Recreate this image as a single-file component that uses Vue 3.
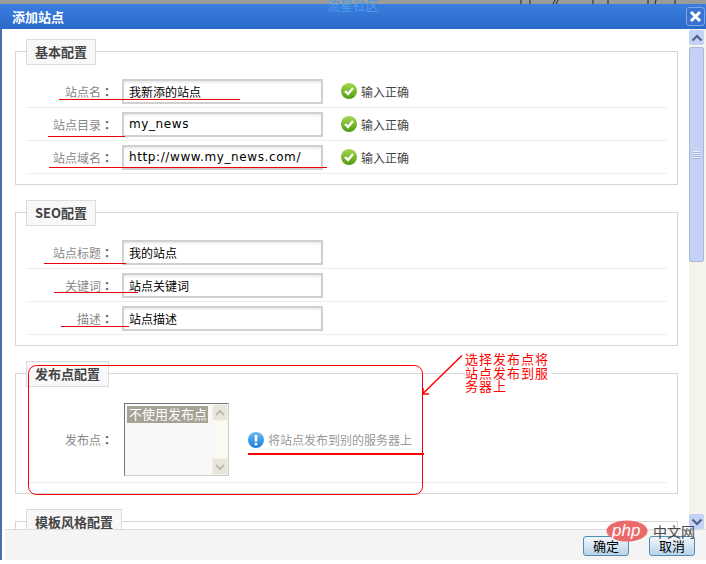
<script setup>
const sections = [
  {
    title: '基本配置',
    rows: [
      { label: '站点名', value: '我新添的站点', ok: true },
      { label: '站点目录', value: 'my_news', ok: true, latin: true },
      { label: '站点域名', value: 'http://www.my_news.com/', ok: true, latin: true }
    ]
  },
  {
    title: 'SEO配置',
    rows: [
      { label: '站点标题', value: '我的站点' },
      { label: '关键词', value: '站点关键词' },
      { label: '描述', value: '站点描述' }
    ]
  }
]
const underlines = [
  [59, 240, 99], [48, 125, 136], [49, 327, 167],
  [44, 126, 263], [54, 138, 292], [61, 129, 326]
]
</script>

<template>
  <div class="window">
    <div class="strip"></div>
    <header class="titlebar">
      <span class="title">添加站点</span>
      <span class="close">
        <svg width="17" height="17" viewBox="0 0 17 17">
          <path d="M4 4l9 9M13 4l-9 9" stroke="#fff" stroke-width="3" fill="none" />
        </svg>
      </span>
    </header>

    <div class="frame">
      <div class="main">
        <div class="content">
          <section v-for="s in sections" :key="s.title" class="group">
            <div class="legend">{{ s.title }}</div>
            <div v-for="r in s.rows" :key="r.label" class="row">
              <label class="label">{{ r.label }}<span class="colon">：</span></label>
              <input class="field" :class="{ latin: r.latin }" :value="r.value" readonly />
              <template v-if="r.ok">
                <svg class="icon check" width="16" height="16" viewBox="0 0 16 16">
                  <defs>
                    <linearGradient id="g1" x1="0" y1="0" x2="0" y2="1">
                      <stop offset="0" stop-color="#a6d84e" />
                      <stop offset="1" stop-color="#4f9a12" />
                    </linearGradient>
                  </defs>
                  <circle cx="8" cy="8" r="8" fill="url(#g1)" />
                  <path d="M4 8l3 3 5-6" stroke="#fff" stroke-width="2.4" fill="none" />
                </svg>
                <span class="ok">输入正确</span>
              </template>
            </div>
          </section>

          <section class="group">
            <div class="legend">发布点配置</div>
            <div class="row tall">
              <label class="label">发布点<span class="colon">：</span></label>
              <div class="listbox">
                <div class="options"><span class="option">不使用发布点</span></div>
                <div class="listbar">
                  <span class="listbtn">
                    <svg width="12" height="8" viewBox="0 0 12 8"><path d="M2 6l4-4 4 4" stroke="#bdbcae" stroke-width="2" fill="none" /></svg>
                  </span>
                  <span class="listbtn">
                    <svg width="12" height="8" viewBox="0 0 12 8"><path d="M2 2l4 4 4-4" stroke="#bdbcae" stroke-width="2" fill="none" /></svg>
                  </span>
                </div>
              </div>
              <svg class="icon info" width="16" height="16" viewBox="0 0 16 16">
                <defs>
                  <linearGradient id="g2" x1="0" y1="0" x2="0" y2="1">
                    <stop offset="0" stop-color="#6bb8f0" />
                    <stop offset="1" stop-color="#1a7fd8" />
                  </linearGradient>
                </defs>
                <circle cx="8" cy="8" r="8" fill="url(#g2)" />
                <path d="M8 3v6.5" stroke="#fff" stroke-width="2.6" />
                <circle cx="8" cy="12.2" r="1.4" fill="#fff" />
              </svg>
              <span class="hint">将站点发布到别的服务器上</span>
            </div>
          </section>

          <section class="group">
            <div class="legend">模板风格配置</div>
          </section>
        </div>

        <aside class="scrollbar">
          <span class="sbtn">
            <svg width="12" height="8" viewBox="0 0 12 8"><path d="M1.5 6.5L6 2l4.5 4.5" stroke="#4d6185" stroke-width="2.2" fill="none" /></svg>
          </span>
          <div class="thumb"><span class="grip"></span></div>
          <div class="track"></div>
          <span class="sbtn">
            <svg width="12" height="8" viewBox="0 0 12 8"><path d="M1.5 1.5L6 6l4.5-4.5" stroke="#4d6185" stroke-width="2.2" fill="none" /></svg>
          </span>
        </aside>
      </div>

      <footer class="footer">
        <button class="btn">确定</button>
        <button class="btn">取消</button>
      </footer>
    </div>
    <div class="bottom"></div>

    <span class="ghost">流星社区</span>
    <svg class="overlay" width="706" height="564" viewBox="0 0 706 564">
      <path d="M521 0v4M530 0v4M553 4l2-4M556 4l2-4M593 0v4M608 0v4M648 0v4M655 4l1-4M675 0v4" stroke="#222" stroke-width="1" fill="none" />
      <line v-for="(u, i) in underlines" :key="i" :x1="u[0]" :x2="u[1]" :y1="u[2] + 0.5" :y2="u[2] + 0.5" stroke="#e8000c" stroke-width="1" />
      <rect x="28.5" y="365.5" width="394" height="129" rx="8" fill="none" stroke="#f00" stroke-width="1" />
      <path d="M248 454h176" stroke="#f00" stroke-width="2" />
      <path d="M462 355.500L423 393.500M423 394h6M423 388v6" stroke="#f00" stroke-width="1.500" fill="none" />
      <ellipse cx="627" cy="531" rx="20.500" ry="10.500" fill="#ea6a6a" />
      <text x="612" y="536" class="php">php</text>
    </svg>
    <div class="note">选择发布点将<br />站点发布到服<br />务器上</div>
    <span class="cn">中文网</span>
  </div>
</template>

<style>
html, body { margin: 0; background: #fff; }
</style>

<style scoped>
.window {
  position: relative;
  width: 706px;
  height: 564px;
  overflow: hidden;
  display: flex;
  flex-direction: column;
  background: #fff;
  font-family: "Noto Sans CJK SC", "Liberation Sans", sans-serif;
  font-size: 12px;
}
.strip { height: 4px; background: #9b9b9b; flex: none; }
.titlebar {
  flex: none;
  height: 25px;
  box-sizing: border-box;
  padding: 0 1px 0 12px;
  display: flex;
  align-items: center;
  justify-content: space-between;
  background: linear-gradient(#3b7de0, #2a6bc8);
}
.title { color: #fff; font-size: 13px; font-weight: 700; }
.close {
  width: 17px;
  height: 17px;
  border: 1px solid #7fa6e8;
  border-radius: 3px;
  background: #3a72cf;
  display: flex;
}
.frame {
  flex: 1;
  min-height: 0;
  display: flex;
  flex-direction: column;
  border-left: 2px solid #4a6ea9;
}
.main {
  flex: 1;
  min-height: 0;
  display: flex;
}
.content {
  flex: 1;
  min-width: 0;
  overflow: hidden;
  padding: 22px 0 0 13px;
}
.group {
  width: 663px;
  box-sizing: border-box;
  border: 1px solid #d6d6d6;
  padding: 0 10px 10px;
  margin-bottom: 27px;
}
.legend {
  display: table;
  box-sizing: border-box;
  height: 26px;
  line-height: 23px;
  padding: 0 8px;
  margin: -13px 0 10px;
  border: 1px solid #dcdcdc;
  background: #f8f8f8;
  color: #444;
  font-size: 13px;
  font-weight: 700;
}
.row {
  display: flex;
  align-items: center;
  box-sizing: border-box;
  height: 33px;
  border-bottom: 1px solid #eeeeee;
}
.row.tall { height: 86px; }
.label {
  width: 87px;
  flex: none;
  text-align: right;
  color: #888;
}
.colon { font-family: "Noto Sans CJK TC", sans-serif; color: #666; font-weight: 700; }
.field {
  width: 201px;
  height: 25px;
  box-sizing: border-box;
  margin: 0 0 0 9px;
  padding: 0 0 0 5px;
  border: 2px solid #d0d0d0;
  outline: none;
  background: #fff;
  box-shadow: inset 0 2px 2px #eee;
  color: #000;
  font-family: "DejaVu Sans", "Noto Sans CJK SC", sans-serif;
  font-size: 12px;
}
.field.latin { letter-spacing: 0.6px; }
.icon { flex: none; }
.check { margin-left: 18px; }
.ok { margin-left: 4px; color: #444; }
.listbox {
  width: 105px;
  height: 73px;
  box-sizing: border-box;
  margin-left: 11px;
  display: flex;
  border: 1px solid;
  border-color: #777 #ccc #ccc #777;
  background: #f8f8f8;
}
.options { flex: 1; padding: 2px; }
.option {
  display: block;
  box-sizing: border-box;
  width: 81px;
  height: 17px;
  padding-left: 2px;
  line-height: 16px;
  background: #a6a294;
  color: #fff;
  font-size: 13px;
  white-space: nowrap;
}
.listbar {
  width: 16px;
  display: flex;
  flex-direction: column;
  justify-content: space-between;
  background: #fbfaf2;
}
.listbtn {
  height: 15px;
  display: flex;
  align-items: center;
  justify-content: center;
  background: #e8e6da;
  border: 1px solid #f4f3ea;
}
.info { margin-left: 19px; }
.hint { margin-left: 4px; color: #999; }
.scrollbar {
  width: 17px;
  flex: none;
  display: flex;
  flex-direction: column;
  align-items: flex-start;
  background: #f5f4ea;
}
.scrollbar > .sbtn {
  width: 15px;
  height: 15px;
  flex: none;
  display: flex;
  align-items: center;
  justify-content: center;
  background: #c4d2f5;
  border-radius: 2px;
}
.scrollbar > .sbtn:first-child { margin-top: 1px; }
.thumb {
  width: 15px;
  height: 215px;
  box-sizing: border-box;
  margin-top: 2px;
  flex: none;
  display: flex;
  align-items: center;
  justify-content: center;
  border: 1px solid #a9b9da;
  border-radius: 2px;
  background: #c4d2f6;
}
.grip {
  width: 7px;
  height: 8px;
  background: repeating-linear-gradient(#eef2fd 0 1px, #9fb2dc 1px 2px);
}
.track { flex: 1; }
.footer {
  flex: none;
  height: 31px;
  box-sizing: border-box;
  margin-left: 3px;
  padding: 6px 11px 0 0;
  display: flex;
  justify-content: flex-end;
  gap: 20px;
  align-items: flex-start;
  border-top: 1px solid #dcdce4;
  background: #f4f4f4;
}
.bottom { flex: none; height: 4px; background: #fff; }
.btn {
  width: 46px;
  height: 20px;
  padding: 0;
  border: 1px solid #4f8fb5;
  border-radius: 3px;
  background: linear-gradient(#f4f8fc, #b7d3ea);
  color: #000;
  font-family: inherit;
  font-size: 13px;
  line-height: 18px;
}
.ghost {
  position: absolute;
  left: 327px;
  top: -3px;
  color: #4c9ee9;
  font-size: 13px;
  line-height: 16px;
}
.overlay { position: absolute; left: 0; top: 0; pointer-events: none; }
.php { font: italic 17px "Liberation Sans", sans-serif; fill: #fff; }
.note {
  position: absolute;
  left: 465px;
  top: 352px;
  padding-right: 3px;
  background: #fff;
  color: #f00;
  font-size: 13px;
  letter-spacing: 1px;
  line-height: 13.5px;
}
.cn {
  position: absolute;
  left: 653px;
  top: 522px;
  color: #4a4a4a;
  font-size: 14px;
  line-height: 18px;
}
</style>
